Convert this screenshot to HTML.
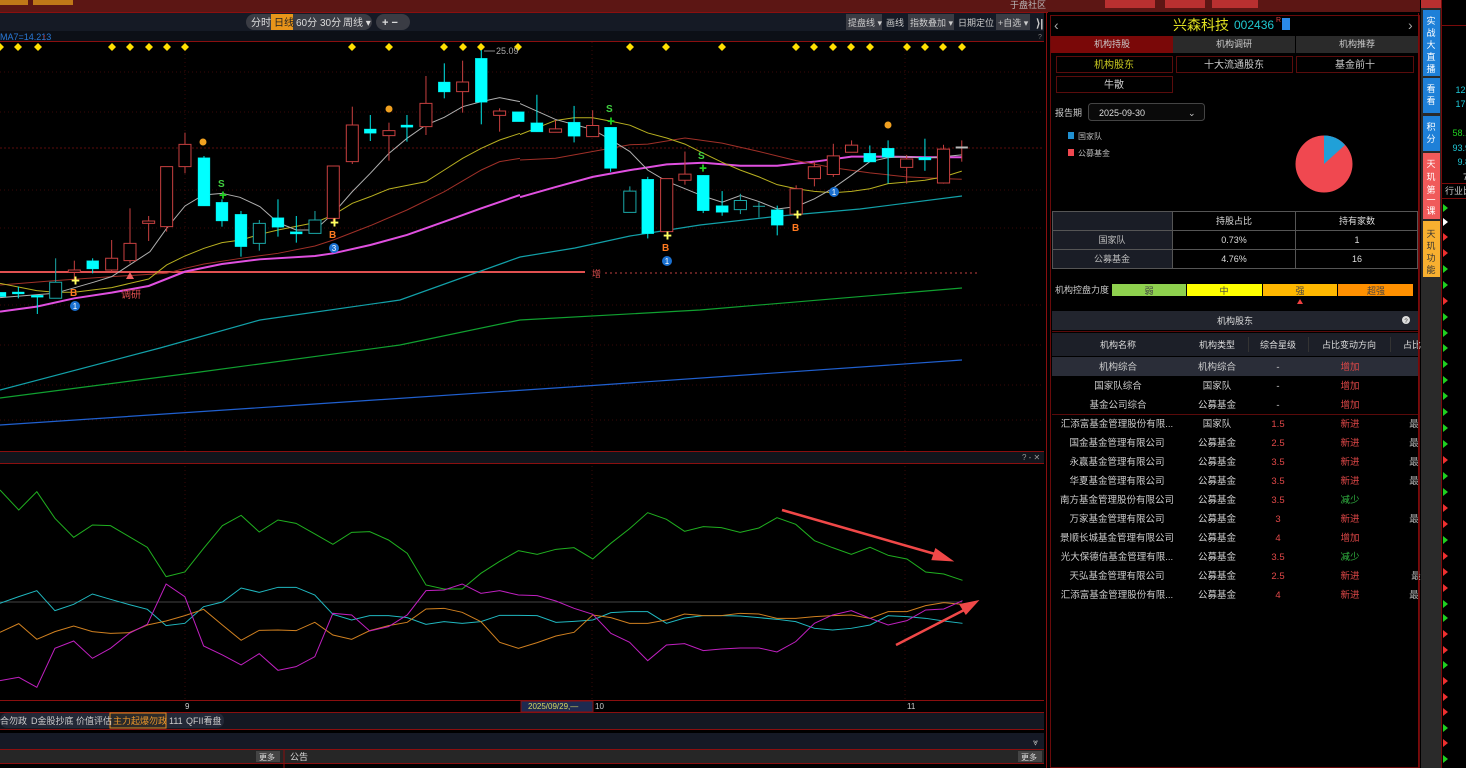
<!DOCTYPE html>
<html><head><meta charset="utf-8"><style>
html,body{margin:0;padding:0;background:#000;width:1466px;height:768px;overflow:hidden}
svg{display:block}
text{font-family:"Liberation Sans","Noto Sans CJK SC",sans-serif}
</style></head><body>
<svg width="1466" height="768" viewBox="0 0 1466 768" xmlns="http://www.w3.org/2000/svg">
<rect width="1466" height="768" fill="#000"/>
<rect x="0" y="0" width="1420" height="12" fill="#5c1614"/>
<rect x="0" y="0" width="28" height="5" fill="#c07818"/><rect x="33" y="0" width="40" height="5" fill="#c07818"/>
<rect x="1105" y="0" width="50" height="8" fill="#b83030"/><rect x="1165" y="0" width="40" height="8" fill="#b83030"/><rect x="1212" y="0" width="46" height="8" fill="#b83030"/>
<text x="1010" y="8" font-size="9" fill="#bbb">于盘社区</text>
<line x1="0" y1="12.5" x2="1048" y2="12.5" stroke="#8a0f0f"/>
<rect x="0" y="13" width="1048" height="18" fill="#151a25"/>
<rect x="246" y="14" width="126" height="16" rx="8" fill="#3a3c44"/>
<rect x="271" y="14" width="22" height="16" fill="#e8951a"/>
<g font-size="10" fill="#ddd"><text x="251" y="26">分时</text><text x="274" y="26" fill="#222">日线</text><text x="296" y="26">60分</text><text x="320" y="26">30分</text><text x="343" y="26">周线 ▾</text></g>
<rect x="376" y="14" width="34" height="16" rx="8" fill="#3a3c44"/>
<text x="382" y="26" font-size="11" fill="#ddd" font-weight="bold">+  −</text>
<rect x="846" y="14" width="36" height="16" fill="#3a3c44"/><rect x="908" y="14" width="46" height="16" fill="#3a3c44"/><rect x="996" y="14" width="34" height="16" fill="#3a3c44"/>
<g font-size="9" fill="#ccc"><text x="848" y="26">提盘线 ▾</text><text x="886" y="26">画线</text><text x="910" y="26">指数叠加 ▾</text><text x="958" y="26">日期定位</text><text x="998" y="26">+自选 ▾</text><text x="1036" y="27" font-size="11" font-weight="bold">⟩|</text></g>
<rect x="0" y="31" width="1048" height="10" fill="#0c0f16"/>
<text x="0" y="40" font-size="9" fill="#2a7ad8">MA7=14.213</text><text x="42" y="40" font-size="9" fill="#d03030">↑</text>
<text x="1038" y="39" font-size="7" fill="#777">?</text>
<line x1="0" y1="41.5" x2="1048" y2="41.5" stroke="#8a0f0f"/>
<g stroke="#3a0808" stroke-dasharray="1,3">
<line x1="0" y1="72" x2="1048" y2="72"/><line x1="0" y1="112" x2="1048" y2="112"/><line x1="0" y1="190" x2="1048" y2="190"/><line x1="0" y1="228" x2="1048" y2="228"/><line x1="0" y1="305" x2="1048" y2="305"/><line x1="0" y1="345" x2="1048" y2="345"/><line x1="0" y1="385" x2="1048" y2="385"/><line x1="0" y1="420" x2="1048" y2="420"/>
<line x1="185" y1="42" x2="185" y2="700"/><line x1="592" y1="42" x2="592" y2="700"/><line x1="905" y1="42" x2="905" y2="700"/>
</g>
<line x1="0" y1="148" x2="1048" y2="148" stroke="#5a0b0b" stroke-dasharray="2,2"/>
<g fill="#ffe000">
<path id="dm" d="M0,43 l4,4 -4,4 -4,-4z"/>
<use href="#dm" x="18"/><use href="#dm" x="38"/><use href="#dm" x="112"/><use href="#dm" x="130"/><use href="#dm" x="149"/><use href="#dm" x="167"/><use href="#dm" x="185"/><use href="#dm" x="352"/><use href="#dm" x="389"/><use href="#dm" x="444"/><use href="#dm" x="463"/><use href="#dm" x="481"/><use href="#dm" x="518"/><use href="#dm" x="630"/><use href="#dm" x="666"/><use href="#dm" x="722"/><use href="#dm" x="796"/><use href="#dm" x="814"/><use href="#dm" x="833"/><use href="#dm" x="851"/><use href="#dm" x="870"/><use href="#dm" x="907"/><use href="#dm" x="925"/><use href="#dm" x="943"/><use href="#dm" x="962"/>
</g>
<text x="496" y="54" font-size="9" fill="#aaa">25.09</text><line x1="484" y1="51" x2="495" y2="51" stroke="#888"/>
<line x1="0" y1="272" x2="585" y2="272" stroke="#e05050" stroke-width="2"/>
<line x1="605" y1="273" x2="978" y2="273" stroke="#c04040" stroke-dasharray="2,3"/>
<text x="592" y="277" font-size="9" fill="#e05050">增</text>
<polyline fill="none" stroke="#12a0a8" stroke-width="1.2" points="0,390 160,348 260,320 400,300 520,257 575,248 630,236 700,225 780,216 860,209 962,196"/>
<polyline fill="none" stroke="#10a030" stroke-width="1.2" points="0,398 200,372 400,345 520,320 700,310 962,288"/>
<polyline fill="none" stroke="#2060d0" stroke-width="1.2" points="0,425 300,405 600,385 962,360"/>
<g transform="translate(0,40) scale(0.3333)" fill="none">
<polyline vector-effect="non-scaling-stroke" stroke="#e050e0" stroke-width="2" points="0,815 110,800 223,775 335,758 446,738 555,695 666,672 780,658 945,648 1000,640 1111,615 1221,585 1333,545 1444,505 1560,465"/>
<polyline vector-effect="non-scaling-stroke" stroke="#a03028" stroke-width="1" points="0,735 165,722 335,710 500,700 555,685 612,672 723,655 834,640 945,618 1000,600 1111,557 1221,510 1333,455 1444,390 1499,365 1560,355"/>
<polyline vector-effect="non-scaling-stroke" stroke="#b8b020" stroke-width="1" points="0,730 110,752 165,757 223,757 335,743 446,717 500,675 555,648 612,625 666,608 723,600 780,583 834,570 945,548 1000,525 1057,490 1111,470 1167,447 1278,425 1333,390 1388,355 1444,325 1499,300 1560,280"/>
<polyline vector-effect="non-scaling-stroke" stroke="#b0b0b0" stroke-width="1" points="0,773 165,760 280,727 335,710 450,635 500,565 555,498 610,465 666,460 720,472 780,500 834,548 889,570 945,570 1000,520 1057,455 1111,400 1167,340 1221,295 1278,255 1333,232 1388,200 1444,185 1499,173 1560,185"/>
<g stroke="#00e8e8" fill="#00ffff">
<line x1="55" y1="740" x2="55" y2="775" vector-effect="non-scaling-stroke"/><rect x="37" y="756" width="36" height="6"/>
<line x1="112" y1="766" x2="112" y2="822" vector-effect="non-scaling-stroke"/><rect x="94" y="766" width="36" height="6"/>
<line x1="278" y1="655" x2="278" y2="700" vector-effect="non-scaling-stroke"/><rect x="260" y="662" width="36" height="25"/>
<line x1="612" y1="348" x2="612" y2="498" vector-effect="non-scaling-stroke"/><rect x="594" y="353" width="36" height="145"/>
<line x1="666" y1="478" x2="666" y2="560" vector-effect="non-scaling-stroke"/><rect x="648" y="487" width="36" height="56"/>
<line x1="723" y1="513" x2="723" y2="650" vector-effect="non-scaling-stroke"/><rect x="705" y="523" width="36" height="97"/>
<line x1="834" y1="478" x2="834" y2="590" vector-effect="non-scaling-stroke"/><rect x="816" y="533" width="36" height="29"/>
<line x1="889" y1="528" x2="889" y2="608" vector-effect="non-scaling-stroke"/><rect x="871" y="575" width="36" height="7"/>
<line x1="1111" y1="225" x2="1111" y2="303" vector-effect="non-scaling-stroke"/><rect x="1093" y="267" width="36" height="13"/>
<line x1="1221" y1="225" x2="1221" y2="305" vector-effect="non-scaling-stroke"/><rect x="1203" y="255" width="36" height="7"/>
<line x1="1333" y1="70" x2="1333" y2="175" vector-effect="non-scaling-stroke"/><rect x="1315" y="126" width="36" height="30"/>
<line x1="1444" y1="30" x2="1444" y2="253" vector-effect="non-scaling-stroke"/><rect x="1426" y="55" width="36" height="132"/>
<rect x="1537" y="215" width="36" height="30"/>
<rect x="0" y="757" width="18" height="13"/>
</g>
<g stroke="#1aa8a8" fill="none">
<line x1="167" y1="655" x2="167" y2="775" vector-effect="non-scaling-stroke"/><rect x="149" y="727" width="36" height="48" fill="#000" vector-effect="non-scaling-stroke"/>
<line x1="778" y1="540" x2="778" y2="632" vector-effect="non-scaling-stroke"/><rect x="760" y="550" width="36" height="60" fill="#000" vector-effect="non-scaling-stroke"/>
<line x1="945" y1="513" x2="945" y2="580" vector-effect="non-scaling-stroke"/><rect x="927" y="540" width="36" height="40" fill="#000" vector-effect="non-scaling-stroke"/>
</g>
<g stroke="#c84040" fill="#000">
<line x1="223" y1="662" x2="223" y2="720" vector-effect="non-scaling-stroke"/><rect x="205" y="690" width="36" height="7" vector-effect="non-scaling-stroke"/>
<line x1="335" y1="600" x2="335" y2="695" vector-effect="non-scaling-stroke"/><rect x="317" y="655" width="36" height="35" vector-effect="non-scaling-stroke"/>
<line x1="390" y1="505" x2="390" y2="670" vector-effect="non-scaling-stroke"/><rect x="372" y="610" width="36" height="52" vector-effect="non-scaling-stroke"/>
<line x1="446" y1="528" x2="446" y2="603" vector-effect="non-scaling-stroke"/><rect x="428" y="543" width="36" height="7" vector-effect="non-scaling-stroke"/>
<line x1="500" y1="380" x2="500" y2="575" vector-effect="non-scaling-stroke"/><rect x="482" y="380" width="36" height="180" vector-effect="non-scaling-stroke"/>
<line x1="555" y1="278" x2="555" y2="400" vector-effect="non-scaling-stroke"/><rect x="537" y="313" width="36" height="67" vector-effect="non-scaling-stroke"/>
<line x1="1000" y1="378" x2="1000" y2="545" vector-effect="non-scaling-stroke"/><rect x="982" y="378" width="36" height="157" vector-effect="non-scaling-stroke"/>
<line x1="1057" y1="200" x2="1057" y2="372" vector-effect="non-scaling-stroke"/><rect x="1039" y="255" width="36" height="110" vector-effect="non-scaling-stroke"/>
<line x1="1167" y1="248" x2="1167" y2="362" vector-effect="non-scaling-stroke"/><rect x="1149" y="272" width="36" height="15" vector-effect="non-scaling-stroke"/>
<line x1="1278" y1="108" x2="1278" y2="285" vector-effect="non-scaling-stroke"/><rect x="1260" y="190" width="36" height="70" vector-effect="non-scaling-stroke"/>
<line x1="1388" y1="62" x2="1388" y2="218" vector-effect="non-scaling-stroke"/><rect x="1370" y="126" width="36" height="29" vector-effect="non-scaling-stroke"/>
<line x1="1499" y1="205" x2="1499" y2="275" vector-effect="non-scaling-stroke"/><rect x="1481" y="213" width="36" height="13" vector-effect="non-scaling-stroke"/>
</g>
</g>
<g transform="translate(520,40) scale(0.338)" fill="none">
<polyline vector-effect="non-scaling-stroke" stroke="#e050e0" stroke-width="2" points="0,465 105,435 215,405 325,385 434,368 542,363 652,372 761,372 871,360 981,345 1089,345 1198,347 1307,347"/>
<polyline vector-effect="non-scaling-stroke" stroke="#a03028" stroke-width="1" points="0,355 105,350 215,330 325,310 378,308 488,290 598,305 707,330 817,357 927,378 1035,393 1144,405 1253,410 1307,412"/>
<polyline vector-effect="non-scaling-stroke" stroke="#b8b020" stroke-width="1" points="0,280 105,238 160,230 215,230 268,240 325,252 378,275 434,290 488,308 542,335 598,362 652,385 707,405 761,428 817,440 871,448 927,452 981,448 1035,440 1089,425 1144,420 1198,415 1253,405 1307,388"/>
<polyline vector-effect="non-scaling-stroke" stroke="#b0b0b0" stroke-width="1" points="0,188 105,235 215,265 268,295 325,330 378,385 434,418 488,440 542,462 598,480 652,460 707,478 761,500 817,493 871,470 927,438 981,400 1035,360 1089,348 1144,345 1198,350 1253,345 1307,340"/>
<g stroke="#00e8e8" fill="#00ffff">
<line x1="50" y1="162" x2="50" y2="272" vector-effect="non-scaling-stroke"/><rect x="32" y="245" width="36" height="27"/>
<line x1="160" y1="195" x2="160" y2="303" vector-effect="non-scaling-stroke"/><rect x="142" y="243" width="36" height="42"/>
<line x1="268" y1="258" x2="268" y2="390" vector-effect="non-scaling-stroke"/><rect x="250" y="258" width="36" height="122"/>
<line x1="378" y1="405" x2="378" y2="587" vector-effect="non-scaling-stroke"/><rect x="360" y="412" width="36" height="161"/>
<line x1="542" y1="400" x2="542" y2="512" vector-effect="non-scaling-stroke"/><rect x="524" y="400" width="36" height="105"/>
<line x1="598" y1="447" x2="598" y2="520" vector-effect="non-scaling-stroke"/><rect x="580" y="490" width="36" height="20"/>
<line x1="761" y1="490" x2="761" y2="578" vector-effect="non-scaling-stroke"/><rect x="743" y="502" width="36" height="46"/>
<line x1="1035" y1="312" x2="1035" y2="361" vector-effect="non-scaling-stroke"/><rect x="1017" y="335" width="36" height="26"/>
<line x1="1089" y1="297" x2="1089" y2="425" vector-effect="non-scaling-stroke"/><rect x="1071" y="320" width="36" height="27"/>
<line x1="1198" y1="292" x2="1198" y2="387" vector-effect="non-scaling-stroke"/><rect x="1180" y="347" width="36" height="8"/>
</g>
<g stroke="#1aa8a8" fill="#000">
<line x1="325" y1="433" x2="325" y2="510" vector-effect="non-scaling-stroke"/><rect x="307" y="447" width="36" height="63" vector-effect="non-scaling-stroke"/>
<line x1="652" y1="455" x2="652" y2="515" vector-effect="non-scaling-stroke"/><rect x="634" y="475" width="36" height="27" vector-effect="non-scaling-stroke"/>
<line x1="707" y1="480" x2="707" y2="525" vector-effect="non-scaling-stroke"/><line x1="689" y1="492" x2="725" y2="492" vector-effect="non-scaling-stroke"/>
</g>
<g stroke="#c84040" fill="#000">
<line x1="105" y1="237" x2="105" y2="273" vector-effect="non-scaling-stroke"/><rect x="87" y="263" width="36" height="10" vector-effect="non-scaling-stroke"/>
<line x1="215" y1="208" x2="215" y2="286" vector-effect="non-scaling-stroke"/><rect x="197" y="253" width="36" height="33" vector-effect="non-scaling-stroke"/>
<line x1="434" y1="410" x2="434" y2="567" vector-effect="non-scaling-stroke"/><rect x="416" y="410" width="36" height="157" vector-effect="non-scaling-stroke"/>
<line x1="488" y1="330" x2="488" y2="428" vector-effect="non-scaling-stroke"/><rect x="470" y="397" width="36" height="18" vector-effect="non-scaling-stroke"/>
<line x1="817" y1="430" x2="817" y2="515" vector-effect="non-scaling-stroke"/><rect x="799" y="440" width="36" height="75" vector-effect="non-scaling-stroke"/>
<line x1="871" y1="360" x2="871" y2="433" vector-effect="non-scaling-stroke"/><rect x="853" y="375" width="36" height="35" vector-effect="non-scaling-stroke"/>
<line x1="927" y1="307" x2="927" y2="405" vector-effect="non-scaling-stroke"/><rect x="909" y="343" width="36" height="55" vector-effect="non-scaling-stroke"/>
<line x1="981" y1="297" x2="981" y2="332" vector-effect="non-scaling-stroke"/><rect x="963" y="311" width="36" height="21" vector-effect="non-scaling-stroke"/>
<line x1="1144" y1="340" x2="1144" y2="425" vector-effect="non-scaling-stroke"/><rect x="1126" y="352" width="36" height="25" vector-effect="non-scaling-stroke"/>
<line x1="1253" y1="310" x2="1253" y2="425" vector-effect="non-scaling-stroke"/><rect x="1235" y="323" width="36" height="100" vector-effect="non-scaling-stroke"/>
<line x1="1307" y1="297" x2="1307" y2="360" vector-effect="non-scaling-stroke"/>
</g>
<line x1="1289" y1="318" x2="1325" y2="318" stroke="#bbb" stroke-width="2" vector-effect="non-scaling-stroke"/>
</g>
<g font-size="10" font-weight="bold">
<text x="218" y="187" fill="#40d040">S</text><text x="606" y="112" fill="#40d040">S</text><text x="698" y="159" fill="#40d040">S</text>
<text x="70" y="296" fill="#ff7a20">B</text><text x="329" y="238" fill="#ff7a20">B</text><text x="662" y="251" fill="#ff7a20">B</text><text x="792" y="231" fill="#ff7a20">B</text>
</g>
<g fill="#ffff60" font-size="9"><text x="71" y="284">✚</text><text x="330" y="226">✚</text><text x="663" y="239">✚</text><text x="793" y="218">✚</text></g>
<g fill="#20d020" font-size="8"><text x="219" y="198">✚</text><text x="607" y="124">✚</text><text x="699" y="171">✚</text></g>
<g fill="#1a70d0"><circle cx="75" cy="306" r="5"/><circle cx="334" cy="248" r="5"/><circle cx="667" cy="261" r="5"/><circle cx="834" cy="192" r="5"/></g>
<g fill="#fff" font-size="8" text-anchor="middle"><text x="75" y="309">1</text><text x="334" y="251">3</text><text x="667" y="264">1</text><text x="834" y="195">1</text></g>
<path d="M126,279 l4,-7 4,7z" fill="#f06060"/><text x="121" y="298" font-size="10" fill="#e05050">调研</text>
<g fill="#f0a020"><circle cx="203" cy="142" r="3.5"/><circle cx="389" cy="109" r="3.5"/><circle cx="888" cy="125" r="3.5"/></g>
<line x1="0" y1="451.5" x2="1048" y2="451.5" stroke="#8a0f0f"/>
<rect x="0" y="452" width="1048" height="11" fill="#12151c"/>
<line x1="0" y1="463.5" x2="1048" y2="463.5" stroke="#8a0f0f"/>
<text x="1022" y="460" font-size="8" fill="#999">? - ✕</text>
<line x1="0" y1="602" x2="962" y2="602" stroke="#444"/>
<g transform="translate(0,440) scale(0.6698,0.3333)" fill="none" stroke-width="1">
<polyline vector-effect="non-scaling-stroke" stroke="#20b020" points="0,150 28,210 55,155 82,235 110,292 138,255 165,257 193,290 220,322 248,410 276,396 304,325 332,257 360,226 387,276 415,240 442,250 470,282 497,313 525,277 552,275 580,300 608,340 636,435 663,447 690,447 718,400 746,364 774,332 802,343 830,328 857,323 885,357 912,310 940,266 967,218 995,238 1022,274 1050,260 1077,263 1105,277 1133,264 1160,233 1188,253 1216,302 1243,323 1271,343 1299,322 1326,346 1354,357 1382,396 1409,402 1437,421"/>
<polyline vector-effect="non-scaling-stroke" stroke="#20b8c0" points="0,490 28,470 55,452 82,512 110,493 138,462 165,478 193,494 220,508 248,557 276,550 304,500 332,486 360,444 387,457 415,442 442,442 470,465 497,523 525,540 552,527 580,527 608,533 636,553 663,545 690,550 718,545 746,526 774,526 802,527 830,547 857,544 885,540 912,518 940,515 967,515 995,550 1022,534 1050,527 1077,527 1105,528 1133,533 1160,538 1188,545 1216,565 1243,570 1271,565 1299,555 1326,527 1354,530 1382,535 1409,543 1437,550"/>
<polyline vector-effect="non-scaling-stroke" stroke="#d08020" points="0,577 28,551 55,598 82,575 110,558 138,575 165,580 193,578 220,555 248,543 276,527 304,508 332,555 360,601 387,571 415,570 442,572 470,547 497,585 525,598 552,572 580,557 608,547 636,507 663,505 690,517 718,545 746,607 774,625 802,608 830,588 857,577 885,525 912,533 940,550 967,550 995,540 1022,522 1050,527 1077,527 1105,520 1133,522 1160,535 1188,535 1216,530 1243,527 1271,525 1299,535 1326,515 1354,515 1382,497 1409,488 1437,493"/>
<polyline vector-effect="non-scaling-stroke" stroke="#c020c0" points="0,722 28,712 55,742 82,625 110,603 138,655 165,625 193,580 220,553 248,432 276,470 304,618 332,645 360,675 387,641 415,691 442,680 470,650 497,520 525,525 552,573 580,560 608,525 636,452 663,450 690,432 718,460 746,452 774,465 802,467 830,483 857,505 885,523 912,580 940,607 967,662 995,615 1022,611 1050,632 1077,627 1105,624 1133,624 1160,636 1188,605 1216,550 1243,525 1271,512 1299,535 1326,555 1354,542 1382,510 1409,507 1437,482"/>
</g>
<g stroke="#f04848" stroke-width="2.5" fill="#f04848">
<line x1="782" y1="510" x2="942" y2="556"/><path d="M950,560 l-14,-10 -3,9z"/>
<line x1="896" y1="645" x2="968" y2="608"/><path d="M976,602 l-15,3 5,8z"/>
</g>
<line x1="0" y1="700.5" x2="1048" y2="700.5" stroke="#8a0f0f"/>
<rect x="521" y="701" width="72" height="11" fill="#1e2a50"/><rect x="521" y="701" width="72" height="11" fill="none" stroke="#8a0f0f"/>
<g font-size="8"><text x="185" y="709" fill="#ccc">9</text><text x="528" y="709" fill="#d8d860">2025/09/29,—</text><text x="595" y="709" fill="#ccc">10</text><text x="907" y="709" fill="#ccc">11</text></g>
<line x1="0" y1="712.5" x2="1048" y2="712.5" stroke="#8a0f0f"/>
<rect x="0" y="713" width="1048" height="16" fill="#141822"/>
<rect x="0" y="713" width="224" height="15" rx="7" fill="#232836"/>
<rect x="110" y="713" width="56" height="15" fill="#2a2a2a" stroke="#e08a20"/>
<g font-size="9" fill="#ccc"><text x="0" y="724">合勿政</text><text x="31" y="724">D金股抄底</text><text x="76" y="724">价值评估</text><text x="113" y="724" fill="#e8952a">主力起爆勿政</text><text x="169" y="724">111</text><text x="186" y="724">QFII看盘</text></g>
<line x1="0" y1="729.5" x2="1048" y2="729.5" stroke="#8a0f0f"/>
<rect x="0" y="733" width="1048" height="16" fill="#151925"/>
<text x="1033" y="745" font-size="9" fill="#bbb">⩔</text>
<line x1="0" y1="749.5" x2="1048" y2="749.5" stroke="#8a0f0f"/>
<rect x="0" y="750" width="1048" height="13" fill="#262626"/>
<rect x="256" y="751" width="24" height="11" fill="#444"/><rect x="1018" y="751" width="24" height="11" fill="#444"/>
<g font-size="8" fill="#ddd"><text x="259" y="760">更多</text><text x="290" y="760" font-size="9">公告</text><text x="1021" y="760">更多</text></g>
<line x1="0" y1="763.5" x2="1048" y2="763.5" stroke="#8a0f0f"/>
<line x1="284" y1="750" x2="284" y2="768" stroke="#8a0f0f"/>
<rect x="1044" y="13" width="4" height="755" fill="#000"/>
<line x1="1046.5" y1="13" x2="1046.5" y2="768" stroke="#8a0f0f"/>
<rect x="1049" y="13" width="371" height="755" fill="#000"/>
<rect x="1050.5" y="15.5" width="369" height="752" fill="none" stroke="#6a0a0a"/>
<text x="1054" y="30" font-size="14" fill="#aaa">‹</text><text x="1408" y="30" font-size="14" fill="#aaa">›</text>
<text x="1173" y="30" font-size="14" fill="#e0e020">兴森科技</text>
<text x="1234" y="29" font-size="12" fill="#20c8d0">002436</text>
<text x="1276" y="22" font-size="7" fill="#e04040">R</text><rect x="1282" y="18" width="8" height="12" fill="#2a8ae8"/>
<rect x="1051" y="36" width="122" height="17" fill="#7a0808"/>
<rect x="1173" y="36" width="122" height="17" fill="#2a2a2a"/><rect x="1296" y="36" width="123" height="17" fill="#2a2a2a"/>
<g font-size="9" fill="#ccc" text-anchor="middle"><text x="1112" y="47">机构持股</text><text x="1234" y="47">机构调研</text><text x="1357" y="47">机构推荐</text></g>
<g fill="none" stroke="#5a0c0c"><rect x="1056.5" y="56.5" width="116" height="16"/><rect x="1176.5" y="56.5" width="116" height="16"/><rect x="1296.5" y="56.5" width="117" height="16"/><rect x="1056.5" y="76.5" width="116" height="16"/></g>
<g font-size="10" text-anchor="middle"><text x="1114" y="68" fill="#c8c820">机构股东</text><text x="1234" y="68" fill="#ccc">十大流通股东</text><text x="1355" y="68" fill="#ccc">基金前十</text><text x="1114" y="88" fill="#ccc">牛散</text></g>
<text x="1055" y="116" font-size="9" fill="#ccc">报告期</text>
<rect x="1088.5" y="103.5" width="116" height="17" rx="3" fill="#0a0a0a" stroke="#444"/>
<text x="1099" y="116" font-size="9" fill="#ddd">2025-09-30</text><text x="1188" y="116" font-size="9" fill="#ccc">⌄</text>
<rect x="1068" y="132" width="6" height="7" fill="#2090d0"/><rect x="1068" y="149" width="6" height="7" fill="#f04850"/>
<g font-size="8" fill="#bbb"><text x="1078" y="139">国家队</text><text x="1078" y="156">公募基金</text></g>
<circle cx="1324" cy="164" r="28.5" fill="#f04850"/>
<path d="M1324,164 L1324,135.5 A28.5,28.5 0 0 1 1345,145 Z" fill="#20a0d8"/>
<rect x="1052" y="211" width="120" height="57" fill="#1a1d26"/>
<g stroke="#555" fill="none"><rect x="1052.5" y="211.5" width="365" height="57"/><line x1="1052" y1="230.5" x2="1418" y2="230.5"/><line x1="1052" y1="249.5" x2="1418" y2="249.5"/><line x1="1172.5" y1="211" x2="1172.5" y2="268"/><line x1="1295.5" y1="211" x2="1295.5" y2="268"/></g>
<g font-size="9" fill="#ddd" text-anchor="middle"><text x="1234" y="224">持股占比</text><text x="1357" y="224">持有家数</text><text x="1112" y="243" fill="#bbb">国家队</text><text x="1234" y="243">0.73%</text><text x="1357" y="243">1</text><text x="1112" y="262" fill="#bbb">公募基金</text><text x="1234" y="262">4.76%</text><text x="1357" y="262">16</text></g>
<text x="1055" y="293" font-size="9" fill="#ccc">机构控盘力度</text>
<rect x="1112" y="284" width="74" height="12" fill="#8ed04e"/><rect x="1187" y="284" width="75" height="12" fill="#ffff00"/><rect x="1263" y="284" width="74" height="12" fill="#ffb800"/><rect x="1338" y="284" width="75" height="12" fill="#ff9000"/>
<g font-size="9" fill="#444" text-anchor="middle"><text x="1149" y="294">弱</text><text x="1224" y="294">中</text><text x="1300" y="294">强</text><text x="1376" y="294">超强</text></g>
<path d="M1297,304 l3,-5 3,5z" fill="#f04040"/>
<rect x="1052" y="311" width="366" height="19" fill="#22252e"/>
<text x="1235" y="324" font-size="9" fill="#ddd" text-anchor="middle">机构股东</text>
<circle cx="1406" cy="320" r="4" fill="#ddd"/><text x="1406" y="323" font-size="6" fill="#333" text-anchor="middle">?</text>
<line x1="1052" y1="331.5" x2="1418" y2="331.5" stroke="#5a0a0a"/>
<rect x="1052" y="333" width="366" height="23" fill="#1c1f28"/>
<g font-size="9" fill="#ddd" text-anchor="middle"><text x="1118" y="348">机构名称</text><text x="1217" y="348">机构类型</text><text x="1278" y="348">综合星级</text><text x="1349" y="348">占比变动方向</text><text x="1412" y="348">占比</text></g>
<g stroke="#333"><line x1="1248.5" y1="337" x2="1248.5" y2="352"/><line x1="1308.5" y1="337" x2="1308.5" y2="352"/><line x1="1390.5" y1="337" x2="1390.5" y2="352"/></g>
<rect x="1052" y="357" width="366" height="19" fill="#2a2d38"/>
<line x1="1052" y1="414.5" x2="1418" y2="414.5" stroke="#5a0a0a"/>
<g font-size="9.5" text-anchor="middle">
<g fill="#ccc"><text x="1118" y="370">机构综合</text><text x="1217" y="370">机构综合</text><text x="1278" y="370">-</text>
<text x="1118" y="389">国家队综合</text><text x="1217" y="389">国家队</text><text x="1278" y="389">-</text>
<text x="1118" y="408">基金公司综合</text><text x="1217" y="408">公募基金</text><text x="1278" y="408">-</text></g>
<g fill="#e04848"><text x="1350" y="370">增加</text><text x="1350" y="389">增加</text><text x="1350" y="408">增加</text></g>
<g fill="#ccc">
<text x="1117" y="427">汇添富基金管理股份有限...</text><text x="1217" y="427">国家队</text>
<text x="1117" y="446">国金基金管理有限公司</text><text x="1217" y="446">公募基金</text>
<text x="1117" y="465">永赢基金管理有限公司</text><text x="1217" y="465">公募基金</text>
<text x="1117" y="484">华夏基金管理有限公司</text><text x="1217" y="484">公募基金</text>
<text x="1117" y="503">南方基金管理股份有限公司</text><text x="1217" y="503">公募基金</text>
<text x="1117" y="522">万家基金管理有限公司</text><text x="1217" y="522">公募基金</text>
<text x="1117" y="541">景顺长城基金管理有限公司</text><text x="1217" y="541">公募基金</text>
<text x="1117" y="560">光大保德信基金管理有限...</text><text x="1217" y="560">公募基金</text>
<text x="1117" y="579">天弘基金管理有限公司</text><text x="1217" y="579">公募基金</text>
<text x="1117" y="598">汇添富基金管理股份有限...</text><text x="1217" y="598">公募基金</text>
</g>
<g fill="#e04848"><text x="1278" y="427">1.5</text><text x="1278" y="446">2.5</text><text x="1278" y="465">3.5</text><text x="1278" y="484">3.5</text><text x="1278" y="503">3.5</text><text x="1278" y="522">3</text><text x="1278" y="541">4</text><text x="1278" y="560">3.5</text><text x="1278" y="579">2.5</text><text x="1278" y="598">4</text>
<text x="1350" y="427">新进</text><text x="1350" y="446">新进</text><text x="1350" y="465">新进</text><text x="1350" y="484">新进</text><text x="1350" y="522">新进</text><text x="1350" y="541">增加</text><text x="1350" y="579">新进</text><text x="1350" y="598">新进</text></g>
<g fill="#30b040"><text x="1350" y="503">减少</text><text x="1350" y="560">减少</text></g>
<g fill="#aaa"><text x="1414" y="427">最</text><text x="1414" y="446">最</text><text x="1414" y="465">最</text><text x="1414" y="484">最</text><text x="1414" y="522">最</text><text x="1416" y="579">最</text><text x="1414" y="598">最</text></g>
</g>
<line x1="1418.5" y1="13" x2="1418.5" y2="768" stroke="#7a0a0a"/>
<rect x="1421" y="0" width="20" height="768" fill="#2a2a2a"/>
<rect x="1421" y="0" width="20" height="8" fill="#b83030"/>
<rect x="1423" y="10" width="17" height="66" fill="#1e80d8"/><rect x="1423" y="78" width="17" height="35" fill="#1e80d8"/><rect x="1423" y="116" width="17" height="35" fill="#1e80d8"/>
<rect x="1423" y="153" width="17" height="66" fill="#f05a5a"/><rect x="1423" y="221" width="17" height="56" fill="#f8b030"/>
<g font-size="9" fill="#fff" text-anchor="middle"><text x="1431" y="24">实</text><text x="1431" y="36">战</text><text x="1431" y="48">大</text><text x="1431" y="60">直</text><text x="1431" y="72">播</text><text x="1431" y="92">看</text><text x="1431" y="104">看</text><text x="1431" y="130">积</text><text x="1431" y="142">分</text><text x="1431" y="167">天</text><text x="1431" y="180">玑</text><text x="1431" y="193">第</text><text x="1431" y="203">一</text><text x="1431" y="214">课</text></g>
<g font-size="9" fill="#333" text-anchor="middle"><text x="1431" y="237">天</text><text x="1431" y="249">玑</text><text x="1431" y="261">功</text><text x="1431" y="273">能</text></g>
<line x1="1441.5" y1="0" x2="1441.5" y2="768" stroke="#7a0a0a"/>
<line x1="1442" y1="25.5" x2="1466" y2="25.5" stroke="#7a0a0a"/>
<g font-size="9" text-anchor="end"><text x="1468" y="93" fill="#20c8d8">12.</text><text x="1468" y="107" fill="#20c8d8">17.</text><text x="1470" y="136" fill="#20d020">58.1</text><text x="1470" y="151" fill="#20c8d8">93.9</text><text x="1470" y="165" fill="#20c8d8">9.8</text><text x="1468" y="180" fill="#ddd">7</text><text x="1472" y="194" fill="#ccc">行业比</text></g>
<line x1="1442" y1="183.5" x2="1466" y2="183.5" stroke="#7a0a0a"/><line x1="1442" y1="198.5" x2="1466" y2="198.5" stroke="#7a0a0a"/>
<g>
<path d="M1443,204 l5,4 -5,4z" fill="#20d020"/><path d="M1443,218 l5,4 -5,4z" fill="#fff"/><path d="M1443,233 l5,4 -5,4z" fill="#f03030"/><path d="M1443,249 l5,4 -5,4z" fill="#f03030"/><path d="M1443,265 l5,4 -5,4z" fill="#20d020"/><path d="M1443,281 l5,4 -5,4z" fill="#20d020"/><path d="M1443,297 l5,4 -5,4z" fill="#f03030"/><path d="M1443,313 l5,4 -5,4z" fill="#20d020"/><path d="M1443,329 l5,4 -5,4z" fill="#20d020"/><path d="M1443,344 l5,4 -5,4z" fill="#20d020"/><path d="M1443,360 l5,4 -5,4z" fill="#20d020"/><path d="M1443,376 l5,4 -5,4z" fill="#20d020"/><path d="M1443,392 l5,4 -5,4z" fill="#20d020"/><path d="M1443,408 l5,4 -5,4z" fill="#20d020"/><path d="M1443,424 l5,4 -5,4z" fill="#20d020"/><path d="M1443,440 l5,4 -5,4z" fill="#20d020"/><path d="M1443,456 l5,4 -5,4z" fill="#f03030"/><path d="M1443,472 l5,4 -5,4z" fill="#20d020"/><path d="M1443,488 l5,4 -5,4z" fill="#20d020"/><path d="M1443,504 l5,4 -5,4z" fill="#f03030"/><path d="M1443,520 l5,4 -5,4z" fill="#f03030"/><path d="M1443,536 l5,4 -5,4z" fill="#20d020"/><path d="M1443,552 l5,4 -5,4z" fill="#f03030"/><path d="M1443,568 l5,4 -5,4z" fill="#f03030"/><path d="M1443,584 l5,4 -5,4z" fill="#f03030"/><path d="M1443,600 l5,4 -5,4z" fill="#20d020"/><path d="M1443,614 l5,4 -5,4z" fill="#20d020"/><path d="M1443,630 l5,4 -5,4z" fill="#f03030"/><path d="M1443,646 l5,4 -5,4z" fill="#f03030"/><path d="M1443,661 l5,4 -5,4z" fill="#20d020"/><path d="M1443,677 l5,4 -5,4z" fill="#f03030"/><path d="M1443,693 l5,4 -5,4z" fill="#f03030"/><path d="M1443,708 l5,4 -5,4z" fill="#f03030"/><path d="M1443,724 l5,4 -5,4z" fill="#20d020"/><path d="M1443,739 l5,4 -5,4z" fill="#f03030"/><path d="M1443,755 l5,4 -5,4z" fill="#20d020"/>
</g>
</svg>
</body></html>
